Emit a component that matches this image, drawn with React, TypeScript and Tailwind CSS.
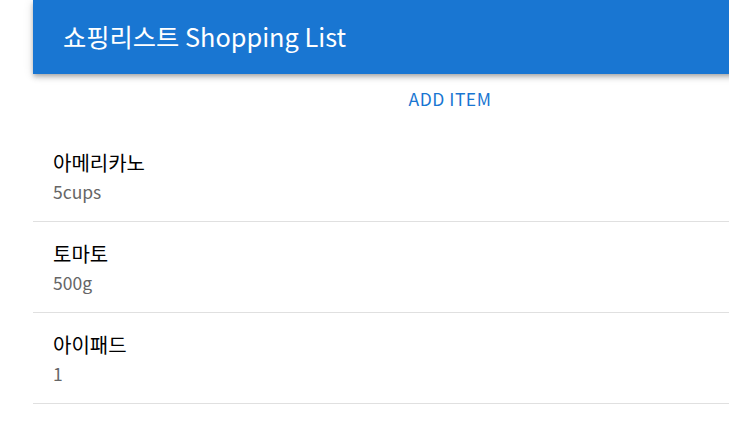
const items = [
  { name: '아메리카노', amount: '5cups' },
  { name: '토마토', amount: '500g' },
  { name: '아이패드', amount: '1' },
]

export default function App() {
  return (
    <div
      className="w-screen h-screen overflow-hidden bg-white"
      style={{ fontFamily: '"Noto Sans CJK KR", "Noto Sans", sans-serif' }}
    >
      <div className="ml-[33px] w-[834px]">
        <header className="h-[74px] flex items-center pl-[30px] pb-[3px] bg-[#1976d2] text-white shadow-[0_2px_4px_-1px_rgba(0,0,0,0.2),0_4px_5px_0_rgba(0,0,0,0.14),0_1px_10px_0_rgba(0,0,0,0.12)]">
          <h1 className="text-[25.3px] leading-8 font-normal">쇼핑리스트 Shopping List</h1>
        </header>

        <div className="flex justify-center pt-[7px] pb-[14px]">
          <button className="h-9 px-2 text-[17.5px] tracking-[0.5px] uppercase text-[#1976d2]">
            Add Item
          </button>
        </div>

        <ul>
          {items.map((item) => (
            <li key={item.name} className="pl-5 pt-[17px] pb-[17px] border-b border-[#e0e0e0]">
              <div className="text-[20px] leading-[30px] text-black">{item.name}</div>
              <div className="mt-px text-[17.5px] leading-[25px] text-[#666]">{item.amount}</div>
            </li>
          ))}
        </ul>
      </div>
    </div>
  )
}
